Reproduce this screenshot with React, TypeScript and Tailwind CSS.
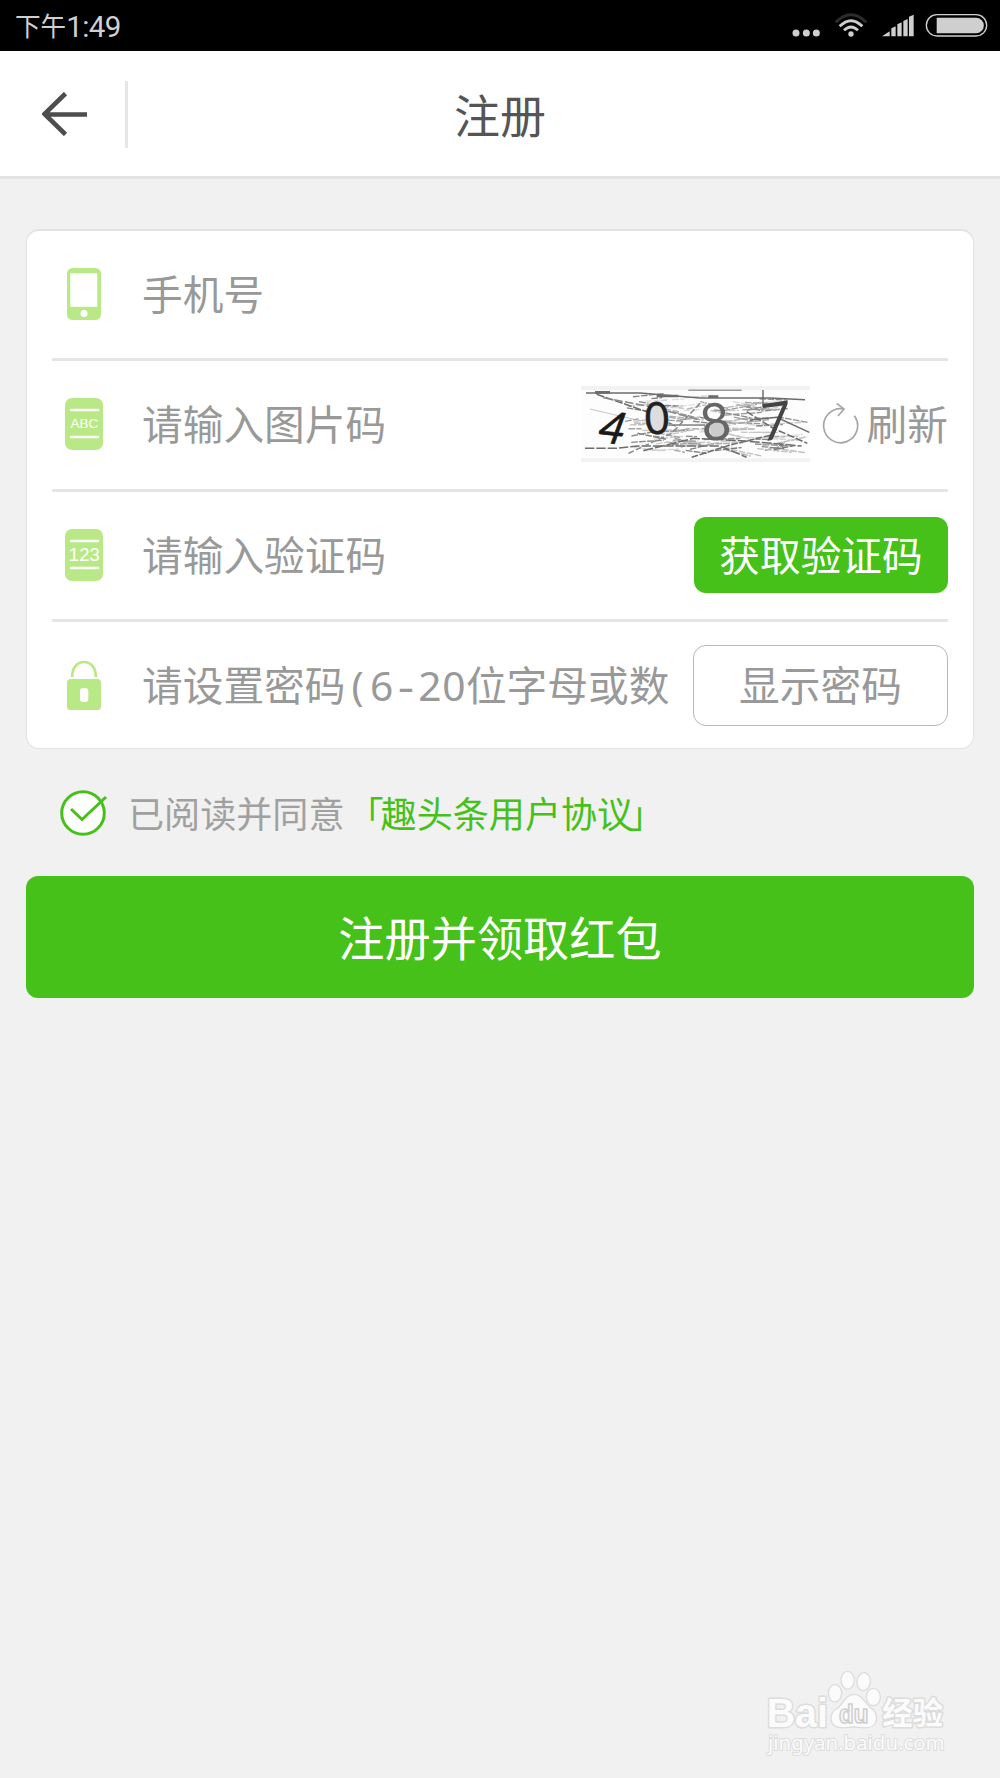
import type { ReactNode } from "react";

function StatusBar() {
  return (
    <div className="flex h-[51px] items-center justify-between bg-black pl-[15px] pr-[12px] text-[#cfcfcf]">
      <div className="flex items-center pt-[2px] font-[Roboto,'Noto_Sans_CJK_SC',sans-serif]">
        <span className="pt-[2px] text-[25.6px] leading-[49px]">下午</span>
        <span className="pt-[2px] text-[29.5px] leading-[49px] tracking-[-0.6px]">1:49</span>
      </div>
      <svg width="196" height="51" viewBox="97 0 588 153" fill="#cfcfcf">
        <circle cx="109" cy="99" r="10.5" />
        <circle cx="140" cy="99" r="10.5" />
        <circle cx="170" cy="99" r="10.5" />
        <g fill="none" strokeWidth="8.5">
          <path d="M228 67Q274 21 320 67" stroke="#2c2c2c" />
          <path d="M240 79Q274 45 308 79" stroke="#cfcfcf" />
          <path d="M253 91Q274 71 295 91" stroke="#cfcfcf" />
        </g>
        <circle cx="274" cy="102" r="8" />
        <path d="M367 109L390 94V109ZM395 85L408 79V109H395ZM413 73L426 67V109H413ZM431 63L444 57V109H431ZM448 50L462 44V109H448Z" />
        <rect x="500" y="44" width="181" height="64" rx="32" fill="none" stroke="#cfcfcf" strokeWidth="4" />
        <path d="M531 53H649A23.5 23.5 0 0 1 649 100H531Z" />
      </svg>
    </div>
  );
}

function Header() {
  return (
    <header className="flex h-[128px] items-center border-b-[3px] border-[#e3e3e3] bg-white text-[#555]">
      <svg className="ml-[42px] mt-px" width="46" height="44" viewBox="0 0 46 44" fill="none" stroke="#4d4d4d" strokeWidth="4.6">
        <path d="M23.5 1.5L2.5 22L23.5 42.5M3 22.5H45" />
      </svg>
      <div className="ml-[37px] mt-[2px] h-[67px] w-[3px] bg-[#e6e6e6]" />
      <h1 className="mr-[128px] flex-1 pb-px text-center text-[46px] leading-[60px]">注册</h1>
    </header>
  );
}

function PhoneIcon() {
  return (
    <svg className="-mt-[2px]" width="38" height="52" viewBox="0 0 38 52">
      <rect x="2" y="0" width="34" height="52" rx="5.5" fill="#b9e986" />
      <rect x="5.3" y="5.3" width="27" height="33.5" fill="#fff" />
      <circle cx="19" cy="45.5" r="3.5" fill="#fff" />
    </svg>
  );
}

function LabelIcon({ label, size, y }: { label: string; size: number; y: number }) {
  return (
    <svg className="-mt-px" width="38" height="52" viewBox="0 0 38 52">
      <rect width="38" height="52" rx="7" fill="#b9e986" />
      <path d="M6 12H33M6 39H33" stroke="#fff" strokeWidth="2.6" strokeLinecap="round" />
      <text x="19.3" y={y} fill="#fff" fontSize={size} textAnchor="middle" fontFamily="Liberation Sans, sans-serif">
        {label}
      </text>
    </svg>
  );
}

function LockIcon() {
  return (
    <svg width="38" height="52" viewBox="0 0 38 52">
      <path d="M7.2 18C7 9 12 3 19 3S31 9 30.8 18" fill="none" stroke="#b9e986" strokeWidth="2.7" />
      <rect x="2" y="20" width="34" height="31" rx="3.5" fill="#b9e986" />
      <rect x="15" y="29" width="8.3" height="14" rx="3" fill="#fff" />
    </svg>
  );
}

// Small seeded generator so the captcha noise is the same on every render
function makeNoise(count: number) {
  let seed = 4087;
  const next = () => {
    seed = (seed * 16807) % 2147483647;
    return seed / 2147483647;
  };
  return Array.from({ length: count }, () => {
    const x = 190 + next() * 480;
    const y = 78 + next() * 165;
    const length = 25 + next() * 90;
    const slope = (next() - 0.5) * 0.5;
    const shade = Math.round(120 + next() * 105);
    return {
      x1: x,
      y1: y,
      x2: Math.min(x + length, 742),
      y2: Math.max(66, Math.min(y + length * slope, 258)),
      stroke: `rgb(${shade},${shade},${shade})`,
    };
  });
}

const noise = makeNoise(130);

function Captcha() {
  return (
    <svg className="-mt-px overflow-visible" width="229" height="76" viewBox="63 48 687 228">
      <rect x="63" y="48" width="687" height="228" fill="#f2f2f2" />
      <rect x="63" y="60" width="687" height="205" fill="#fdfdfd" />
      <g strokeWidth="4" strokeDasharray="20 4">
        {noise.map((line, i) => (
          <line key={i} {...line} />
        ))}
      </g>
      <g fill="none" stroke="#6c6c6c" strokeWidth="4.5">
        <path d="M78 69H240L420 84H630L735 89" />
        <path d="M110 73L260 125L350 170" strokeDasharray="24 5" />
        <path d="M130 83L280 112L420 150" strokeDasharray="26 7" stroke="#888" />
        <path d="M385 61H545" stroke="#999" />
        <path d="M609 60V110" />
        <path d="M75 235H165L235 228H480L560 262" strokeDasharray="28 6" />
        <path d="M560 125L640 175L742 220" strokeDasharray="22 6" />
        <path d="M395 262L510 225L635 195" strokeDasharray="20 5" />
        <path d="M570 150L650 142L748 187" />
        <path d="M205 250L335 190L420 100" strokeDasharray="18 7" stroke="#888" />
        <path d="M250 242L400 205L545 212L725 228" strokeDasharray="30 6" />
        <path d="M325 165H435" stroke="#777" />
        <path d="M290 78H355M105 67H150M445 80H475" strokeWidth="8" />
        <path d="M90 117L230 150L350 165L560 158" strokeWidth="2" stroke="#aaa" />
      </g>
      <ellipse cx="289" cy="144" rx="26" ry="38" fill="#ddd" />
      <ellipse cx="475" cy="178" rx="26" ry="26" fill="#ccc" />
      <g fontFamily="Lato, Liberation Sans, sans-serif" textAnchor="middle">
        <text fontSize="132" transform="translate(143 219) rotate(6) skewX(-14)" fill="#191919" stroke="#191919" strokeWidth="2">4</text>
        <text fontSize="134" transform="translate(293 192) rotate(-3) scale(0.95 1)" fill="#222" stroke="#222">0</text>
        <text fontSize="155" transform="translate(475 210) rotate(-9)" fill="#666">8</text>
        <text fontSize="155" transform="translate(648 208) rotate(-8) skewX(-6)" fill="#444">7</text>
      </g>
    </svg>
  );
}

function RefreshIcon() {
  return (
    <svg className="-mt-[3px]" width="38" height="42" viewBox="786 96 114 126" fill="none" stroke="#a6a6a6" strokeWidth="5">
      <path d="M883 137A51 51 0 1 1 851 117" />
      <path d="M830 100L852 117L834 138" />
    </svg>
  );
}

function CheckIcon() {
  return (
    <svg className="-mt-px" width="50" height="48" viewBox="0 0 50 48" fill="none" stroke="#46c119" strokeWidth="3">
      <circle cx="24" cy="24" r="21.3" fill="#fff" />
      <path d="M12 20L23 30.5L47 8" />
    </svg>
  );
}

function Row({ icon, hint, last, children }: { icon: ReactNode; hint: ReactNode; last?: boolean; children?: ReactNode }) {
  return (
    <div
      className={
        last
          ? "flex h-[127px] items-center pl-[13px]"
          : "flex h-[130.3px] items-center border-b-[3px] border-[#e5e5e5] pl-[13px]"
      }
    >
      {icon}
      <span className="ml-[39px] flex-1 overflow-hidden whitespace-nowrap pb-[3px] text-[40.7px] leading-[60px] text-[#999]">{hint}</span>
      {children}
    </div>
  );
}

function PasswordHint() {
  return (
    <>
      请设置密码
      {["(", "6", "-", "2", "0"].map((char) => (
        <span
          key={char}
          className={
            char === "-"
              ? "inline-block w-[24.1px] scale-x-125 text-center font-['Noto_Sans'] leading-[50px]"
              : "inline-block w-[24.1px] text-center font-['Noto_Sans'] leading-[50px]"
          }
        >
          {char}
        </span>
      ))}
      位字母或数
    </>
  );
}

function Watermark() {
  return (
    <svg className="mt-auto self-end" width="260" height="128" viewBox="0 0 780 384" fill="#fbfbfb" stroke="#dcdcdc" strokeWidth="4">
      <g paintOrder="stroke" strokeWidth="9" strokeLinejoin="round">
        <text x="80" y="230" fontSize="122" fontWeight="700" fontFamily="Liberation Sans, sans-serif" textLength="184" lengthAdjust="spacingAndGlyphs">
          Bai
        </text>
        <text x="427" y="222" fontSize="92" fontWeight="700" fontFamily="Noto Sans CJK SC, sans-serif" textLength="182" lengthAdjust="spacingAndGlyphs">
          经验
        </text>
        <text x="84" y="300" fontSize="62" strokeWidth="6" fontFamily="Noto Sans, sans-serif" textLength="530" lengthAdjust="spacingAndGlyphs">
          jingyan.baidu.com
        </text>
      </g>
      <ellipse cx="285" cy="130" rx="20" ry="26" />
      <ellipse cx="323" cy="91" rx="20" ry="27" />
      <ellipse cx="371" cy="95" rx="20" ry="27" transform="rotate(8 371 95)" />
      <ellipse cx="400" cy="141" rx="21" ry="26" />
      <path d="M342 133C366 133 374 158 390 172C421 190 414 233 380 233C365 235 356 231 342 231C328 231 318 235 303 233C266 231 263 190 294 174C311 159 318 133 342 133Z" />
      <text x="341" y="218" fontSize="78" textAnchor="middle" fill="#fbfbfb" stroke="#cfcfcf" strokeWidth="5" fontWeight="700" fontFamily="Liberation Sans, sans-serif" textLength="88" lengthAdjust="spacingAndGlyphs">
        du
      </text>
    </svg>
  );
}

export default function App() {
  return (
    <div className="flex h-[1778px] w-[1000px] flex-col bg-[#f1f1f1] font-['Noto_Sans_CJK_SC',sans-serif]">
      <StatusBar />
      <Header />
      <main className="px-[26px] pt-[50px]">
        <section className="h-[520px] rounded-[13px] border border-t-2 border-[#e2e2e2] bg-white px-[25px]">
          <Row icon={<PhoneIcon />} hint="手机号" />
          <Row icon={<LabelIcon label="ABC" size={13.5} y={30.2} />} hint="请输入图片码">
            <Captcha />
            <div className="ml-[12px] flex items-center text-[40.7px] leading-[60px] text-[#999]">
              <RefreshIcon />
              <span className="ml-[7px] pb-[3px]">刷新</span>
            </div>
          </Row>
          <Row icon={<LabelIcon label="123" size={18.5} y={32.2} />} hint="请输入验证码">
            <button className="h-[76px] w-[254px] rounded-[12px] bg-[#46c119] pb-[2px] text-[40.7px] leading-[72px] text-white">获取验证码</button>
          </Row>
          <Row icon={<LockIcon />} hint={<PasswordHint />} last>
            <button className="h-[81px] w-[255px] shrink-0 rounded-[13px] border-[1.5px] border-[#b8b8b8] pb-[2px] text-[40.7px] leading-[76px] text-[#999]">
              显示密码
            </button>
          </Row>
        </section>
        <div className="mt-[40px] flex h-[48px] items-center pl-[33px] text-[36.1px] leading-[46px] text-[#a0a0a0]">
          <CheckIcon />
          <span className="ml-[19px] pb-[2px]">已阅读并同意</span>
          <a className="pb-[2px] text-[#46c119]">
            <span className="-mr-[3px] ml-[3px]">「</span>趣头条用户协议<span className="-ml-[5px]">」</span>
          </a>
        </div>
        <button className="mt-[39px] h-[122px] w-full rounded-[12px] bg-[#46c119] pb-[3px] text-[46.2px] leading-[119px] text-white">
          注册并领取红包
        </button>
      </main>
      <Watermark />
    </div>
  );
}
